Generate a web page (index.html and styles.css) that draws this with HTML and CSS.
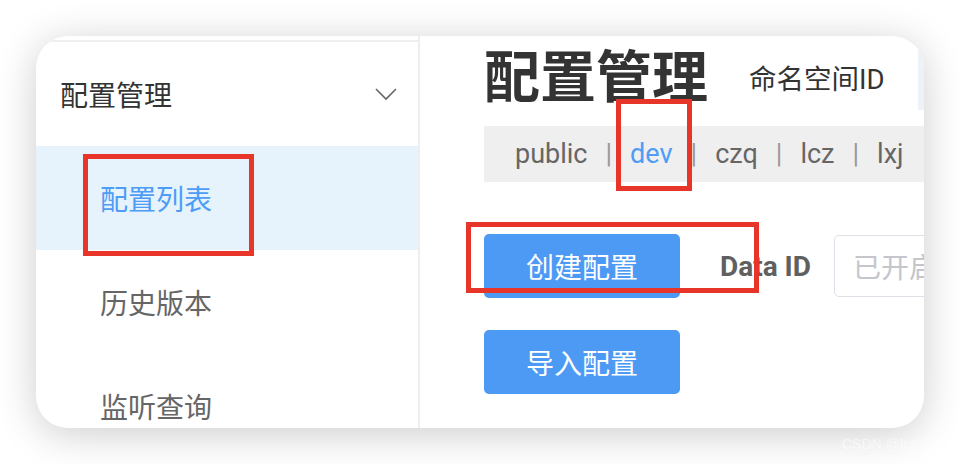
FILE: index.html
```html
<!DOCTYPE html>
<html lang="zh-CN">
<head>
<meta charset="utf-8">
<title>配置管理</title>
<link rel="stylesheet" href="styles.css">
</head>
<body>
<div class="card">
  <aside class="sidebar">
    <div class="menu-head">
      <span>配置管理</span>
      <svg class="chevron" width="22" height="13" viewBox="0 0 22 13"><polyline points="1,1 11,11 21,1" fill="none" stroke="#666" stroke-width="1.6"/></svg>
    </div>
    <div class="menu-item active">配置列表</div>
    <div class="menu-item">历史版本</div>
    <div class="menu-item">监听查询</div>
  </aside>
  <main class="main">
    <div class="title-row">
      <h1 class="title">配置管理</h1>
      <span class="ns-label">命名空间ID</span>
      <div class="ns-select"></div>
    </div>
    <div class="ns-bar">
      <span class="ns">public</span><span class="sep">|</span>
      <span class="ns current">dev</span><span class="sep">|</span>
      <span class="ns">czq</span><span class="sep">|</span>
      <span class="ns">lcz</span><span class="sep">|</span>
      <span class="ns">lxj</span>
    </div>
    <div class="action-row">
      <button class="btn">创建配置</button>
      <span class="field-label">Data ID</span>
      <div class="input">已开启</div>
    </div>
    <div class="action-row second">
      <button class="btn">导入配置</button>
    </div>
  </main>
</div>
<div class="mark mark-list"></div>
<div class="mark mark-dev"></div>
<div class="mark mark-create"></div>
<div class="watermark">CSDN @lcz-20</div>
</body>
</html>
```
FILE: styles.css
```css
* { box-sizing: border-box; }
html, body { margin: 0; padding: 0; background: #fff; }
body {
  width: 960px;
  height: 464px;
  overflow: hidden;
  position: relative;
  font-family: "Roboto", "Noto Sans CJK SC", sans-serif;
}
.card {
  margin: 36px 0 0 36px;
  width: 888px;
  height: 392px;
  border-radius: 32px;
  background: #fff;
  overflow: hidden;
  display: flex;
  box-shadow: 0 6px 40px rgba(0, 0, 0, 0.2);
}
.sidebar {
  width: 384px;
  flex-shrink: 0;
  border-right: 2px solid #eeeeee;
  padding-top: 4px;
}
.menu-head {
  border-top: 2px solid #efefef;
  height: 106px;
  padding: 0 21px 0 24px;
  display: flex;
  align-items: center;
  justify-content: space-between;
  font-size: 28px;
  color: #333;
  font-family: "Noto Sans CJK SC", sans-serif;
}
.chevron { display: block; }
.menu-item {
  height: 104px;
  display: flex;
  align-items: center;
  padding-left: 64px;
  font-size: 28px;
  color: #666;
  font-family: "Noto Sans CJK SC", sans-serif;
}
.menu-item.active {
  background: #e6f2fc;
  color: #4d9cf6;
}
.main {
  flex: 1;
  min-width: 0;
  overflow: hidden;
  padding-left: 64px;
}
.title-row {
  height: 74px;
  display: flex;
  align-items: center;
  white-space: nowrap;
}
.title {
  margin: 0;
  flex-shrink: 0;
  font-size: 56px;
  line-height: 74px;
  font-weight: 700;
  color: #333;
  font-family: "Noto Sans CJK SC", sans-serif;
}
.ns-label {
  flex-shrink: 0;
  margin-left: 41px;
  padding-top: 8px;
  font-size: 27.5px;
  color: #333;
}
.ns-select {
  flex-shrink: 0;
  margin-left: 33px;
  width: 200px;
  align-self: stretch;
  background: #eef2f8;
}
.ns-bar {
  margin-top: 16px;
  height: 56px;
  background: #efefef;
  padding-left: 31px;
  display: flex;
  align-items: center;
  white-space: nowrap;
  font-size: 27px;
  color: #666;
}
.ns.current { color: #4d9cf6; }
.sep {
  margin: 0 18px;
  color: #9a9a9a;
  font-size: 27px;
}
.action-row {
  margin-top: 52px;
  height: 64px;
  display: flex;
  align-items: center;
  white-space: nowrap;
}
.action-row.second { margin-top: 32px; }
.btn {
  flex-shrink: 0;
  width: 196px;
  height: 64px;
  border: none;
  border-radius: 5px;
  background: #4c9af4;
  color: #fff;
  font-size: 28px;
  font-family: "Noto Sans CJK SC", sans-serif;
  padding: 0;
}
.field-label {
  flex-shrink: 0;
  margin-left: 40px;
  font-size: 28px;
  font-weight: 700;
  color: #606060;
}
.input {
  flex-shrink: 0;
  margin-left: 23px;
  width: 200px;
  height: 62px;
  border: 1px solid #dcdfe6;
  border-radius: 5px;
  padding-left: 18px;
  display: flex;
  align-items: center;
  font-size: 28px;
  color: #c4c6cc;
  font-family: "Noto Sans CJK SC", sans-serif;
}
.mark {
  position: absolute;
  border: 5px solid #e8352a;
}
.mark-list { left: 83px; top: 154px; width: 171px; height: 102px; }
.mark-dev { left: 616px; top: 99px; width: 76px; height: 92px; }
.mark-create { left: 466px; top: 222px; width: 293px; height: 71px; }
.watermark {
  position: absolute;
  left: 842px;
  top: 436px;
  font-size: 14px;
  color: rgba(255, 255, 255, 0.55);
  white-space: nowrap;
  font-family: "Liberation Sans", sans-serif;
}
```
